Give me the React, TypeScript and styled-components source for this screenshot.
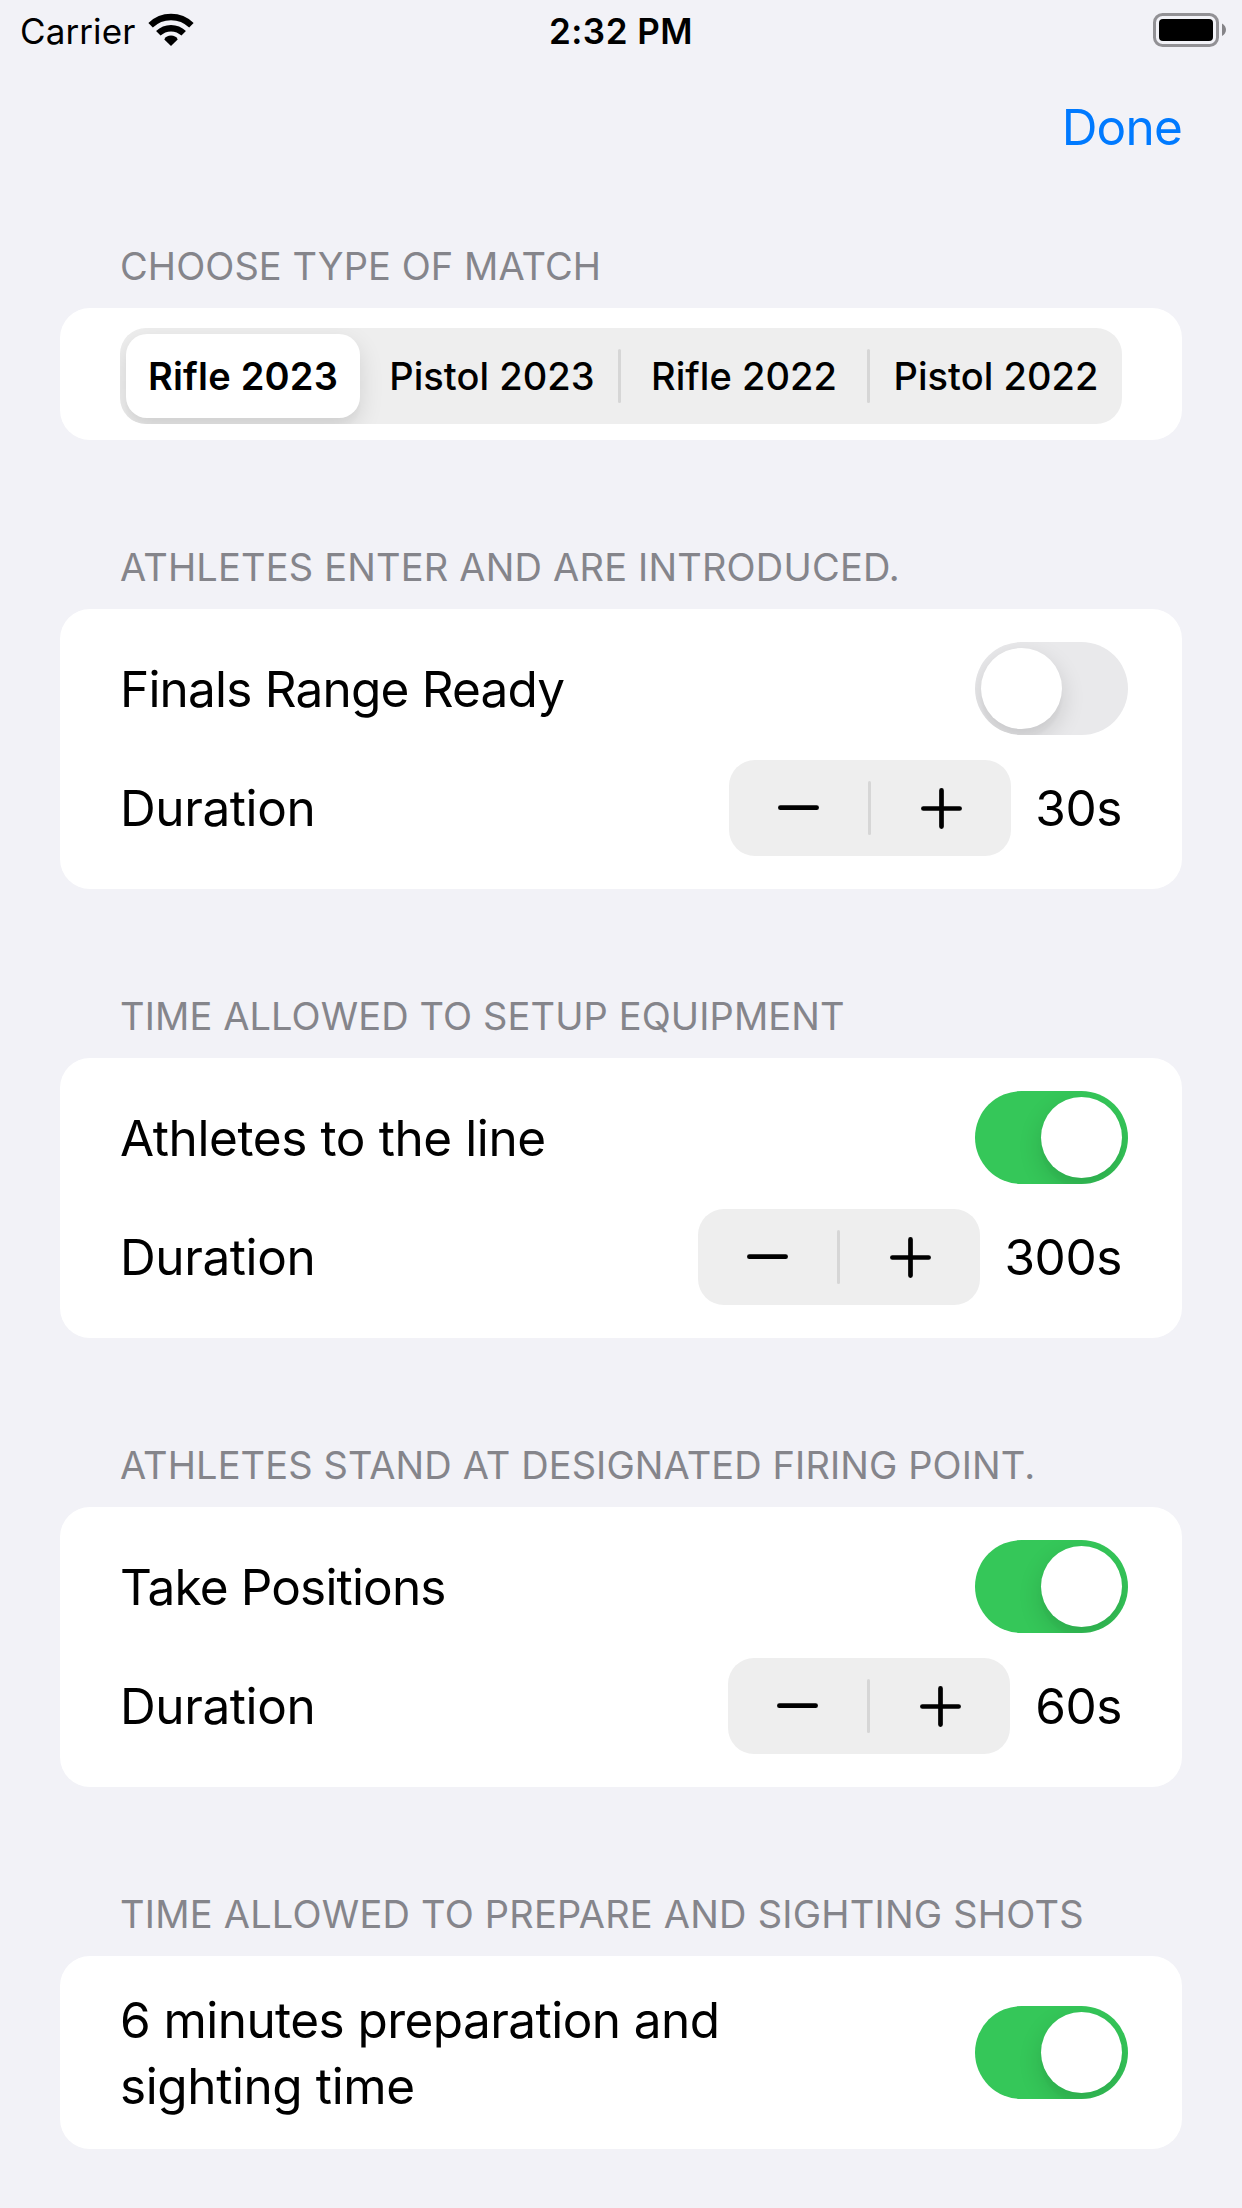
import React, { useState } from "react";
import styled, { createGlobalStyle } from "styled-components";

const GlobalStyle = createGlobalStyle`
  * { box-sizing: border-box; }
  html, body { margin: 0; padding: 0; background: #f2f2f7; }
  body {
    font-family: Inter, "Liberation Sans", sans-serif;
    color: #000;
    -webkit-font-smoothing: antialiased;
  }
  button { font: inherit; color: inherit; border: 0; padding: 0; background: none; }
`;

const Screen = styled.div`
  width: 1242px;
  height: 2208px;
  overflow: hidden;
  background: #f2f2f7;
`;

const StatusBar = styled.header`
  height: 60px;
  padding: 0 16px 0 20px;
  display: grid;
  grid-template-columns: 1fr auto 1fr;
  align-items: start;
`;

const StatusLeft = styled.div`
  display: flex;
  gap: 13px;
  margin-right: 4px;
`;

const Carrier = styled.span`
  font-size: 35px;
  line-height: 62px;
  letter-spacing: 0.1px;
`;

const Clock = styled.span`
  margin-left: -4px;
  font-size: 35px;
  font-weight: 600;
  line-height: 62px;
  letter-spacing: 0.5px;
`;

const WifiIcon = styled.svg`
  width: 46px;
  height: 34px;
  margin-top: 13px;
`;

const BatteryIcon = styled.svg`
  width: 73px;
  height: 34px;
  margin-top: 13px;
  justify-self: end;
`;

const NavBar = styled.nav`
  height: 188px;
  padding: 36px 60px 0;
  display: flex;
  justify-content: flex-end;
  align-items: flex-start;
`;

const DoneButton = styled.button`
  font-size: 49.5px;
  line-height: 62px;
  letter-spacing: -0.8px;
  color: #007aff;
`;

const Section = styled.section`
  padding: 0 60px;
  margin-bottom: 109px;
`;

const SectionTitle = styled.h2<{ $tracking: number }>`
  margin: 0;
  height: 60px;
  padding-left: 60px;
  font-size: 38px;
  font-weight: 400;
  line-height: 36px;
  color: #85858b;
  white-space: nowrap;
  letter-spacing: ${(p) => p.$tracking}px;
`;

const Card = styled.div<{ $padding: string }>`
  border-radius: 30px;
  background: #fff;
  padding: ${(p) => p.$padding};
`;

const Segmented = styled.div`
  height: 96px;
  border-radius: 26px;
  background: #eeeeee;
  overflow: hidden;
  display: grid;
  grid-template-columns: 246px 252px 3px 246px 3px 252px;
  align-items: center;
`;

const Segment = styled.button<{ $selected: boolean }>`
  height: 84px;
  margin: 0 6px;
  border-radius: 21px;
  font-size: 38px;
  white-space: nowrap;
  letter-spacing: ${(p) => (p.$selected ? 0.2 : 0.05)}px;
  font-weight: ${(p) => (p.$selected ? 600 : 500)};
  background: ${(p) => (p.$selected ? "#fff" : "transparent")};
  box-shadow: ${(p) =>
    p.$selected ? "0 9px 24px rgba(0,0,0,.12), 0 9px 3px rgba(0,0,0,.02)" : "none"};
`;

const Separator = styled.span`
  width: 3px;
  height: 54px;
  border-radius: 1.5px;
  background: #d6d6d6;
`;

const Row = styled.div<{ $height: number }>`
  height: ${(p) => p.$height}px;
  display: flex;
  align-items: center;
  justify-content: space-between;
`;

const Label = styled.span<{ $tracking: number }>`
  font-size: 49.5px;
  line-height: 66px;
  white-space: nowrap;
  letter-spacing: ${(p) => p.$tracking}px;
`;

const LabelLines = styled.div`
  display: flex;
  flex-direction: column;
`;

const Track = styled.button<{ $on: boolean }>`
  width: 153px;
  height: 93px;
  margin-right: -6px;
  padding: 6px;
  border-radius: 47px;
  overflow: hidden;
  display: flex;
  justify-content: ${(p) => (p.$on ? "flex-end" : "flex-start")};
  background: ${(p) => (p.$on ? "#35c759" : "#e9e9eb")};
`;

const Knob = styled.span`
  width: 81px;
  height: 81px;
  border-radius: 50%;
  background: #fff;
  box-shadow: 0 9px 24px rgba(0, 0, 0, 0.14), 0 9px 3px rgba(0, 0, 0, 0.02);
`;

const Controls = styled.div`
  display: flex;
  align-items: center;
  gap: 24px;
`;

const StepperBox = styled.div`
  width: 282px;
  height: 96px;
  border-radius: 26px;
  background: #eeeeee;
  display: grid;
  grid-template-columns: 139px 3px 140px;
  align-items: center;
`;

const StepButton = styled.button`
  height: 96px;
  display: flex;
  align-items: center;
  justify-content: center;
`;

const Value = styled.span<{ $width: number }>`
  width: ${(p) => p.$width}px;
  font-size: 49.5px;
  line-height: 66px;
  letter-spacing: -0.4px;
  white-space: nowrap;
  text-align: right;
`;

function Toggle({ initial }: { initial: boolean }) {
  const [on, setOn] = useState(initial);
  return (
    <Track $on={on} role="switch" aria-checked={on} onClick={() => setOn(!on)}>
      <Knob />
    </Track>
  );
}

function Stepper({ onStep }: { onStep: (delta: number) => void }) {
  return (
    <StepperBox>
      <StepButton aria-label="Decrease" onClick={() => onStep(-1)}>
        <svg width="42" height="42" viewBox="0 0 42 42">
          <path d="M2.4 20.7H38.6" stroke="#000" strokeWidth="4.7" strokeLinecap="round" />
        </svg>
      </StepButton>
      <Separator />
      <StepButton aria-label="Increase" onClick={() => onStep(1)}>
        <svg width="42" height="42" viewBox="0 0 42 42">
          <path d="M3.4 21.5H39.6M21.5 3.4V39.6" stroke="#000" strokeWidth="4.7" strokeLinecap="round" />
        </svg>
      </StepButton>
    </StepperBox>
  );
}

interface Phase {
  title: string;
  tracking: number;
  label: string;
  labelTracking: number;
  on: boolean;
  seconds: number;
  valueWidth: number;
}

const phases: Phase[] = [
  { title: "ATHLETES ENTER AND ARE INTRODUCED.", tracking: 0.19, label: "Finals Range Ready", labelTracking: -0.8, on: false, seconds: 30, valueWidth: 87 },
  { title: "TIME ALLOWED TO SETUP EQUIPMENT", tracking: 0.11, label: "Athletes to the line", labelTracking: -0.4, on: true, seconds: 300, valueWidth: 118 },
  { title: "ATHLETES STAND AT DESIGNATED FIRING POINT.", tracking: 0.1, label: "Take Positions", labelTracking: -0.84, on: true, seconds: 60, valueWidth: 88 },
];

function PhaseSection({ phase }: { phase: Phase }) {
  const [seconds, setSeconds] = useState(phase.seconds);
  return (
    <Section>
      <SectionTitle $tracking={phase.tracking}>{phase.title}</SectionTitle>
      <Card $padding="20px 60px 21px">
        <Row $height={119}>
          <Label $tracking={phase.labelTracking}>{phase.label}</Label>
          <Toggle initial={phase.on} />
        </Row>
        <Row $height={120}>
          <Label $tracking={-0.4}>Duration</Label>
          <Controls>
            <Stepper onStep={(d) => setSeconds(seconds + d)} />
            <Value $width={phase.valueWidth}>{seconds}s</Value>
          </Controls>
        </Row>
      </Card>
    </Section>
  );
}

const matchTypes = ["Rifle 2023", "Pistol 2023", "Rifle 2022", "Pistol 2022"];

export default function App() {
  const [match, setMatch] = useState(0);
  return (
    <>
      <GlobalStyle />
      <Screen>
        <StatusBar>
          <StatusLeft>
            <Carrier>Carrier</Carrier>
            <WifiIcon viewBox="0 0 46 34">
              <path d="M23 33 16.3 26.4C17.5 23.8 20 22.6 23 22.6S28.5 23.8 29.7 26.4Z" />
              <path d="M10.3 20.3a18.3 18.3 0 0 1 25.4 0" fill="none" stroke="#000" strokeWidth="6.4" />
              <path d="M2.6 12.3a29.3 29.3 0 0 1 40.8 0" fill="none" stroke="#000" strokeWidth="6.4" />
            </WifiIcon>
          </StatusLeft>
          <Clock>2:32 PM</Clock>
          <BatteryIcon viewBox="0 0 73 34">
            <rect x="1.5" y="1.5" width="63" height="31" rx="8" fill="none" stroke="#929195" strokeWidth="3" />
            <rect x="6" y="6" width="54" height="22" rx="4" />
            <path d="M69 10.5c5.3 2.5 5.3 10 0 12.5Z" fill="#858488" />
          </BatteryIcon>
        </StatusBar>
        <NavBar>
          <DoneButton>Done</DoneButton>
        </NavBar>
        <Section>
          <SectionTitle $tracking={0.07}>CHOOSE TYPE OF MATCH</SectionTitle>
          <Card $padding="20px 60px 16px">
            <Segmented>
              {matchTypes.map((name, i) => (
                <React.Fragment key={name}>
                  {i > 1 && <Separator />}
                  <Segment $selected={i === match} onClick={() => setMatch(i)}>
                    {name}
                  </Segment>
                </React.Fragment>
              ))}
            </Segmented>
          </Card>
        </Section>
        {phases.map((phase) => (
          <PhaseSection key={phase.title} phase={phase} />
        ))}
        <Section>
          <SectionTitle $tracking={0.22}>TIME ALLOWED TO PREPARE AND SIGHTING SHOTS</SectionTitle>
          <Card $padding="0 60px">
            <Row $height={193}>
              <LabelLines>
                <Label $tracking={-0.56}>6 minutes preparation and</Label>
                <Label $tracking={-0.4}>sighting time</Label>
              </LabelLines>
              <Toggle initial={true} />
            </Row>
          </Card>
        </Section>
      </Screen>
    </>
  );
}
